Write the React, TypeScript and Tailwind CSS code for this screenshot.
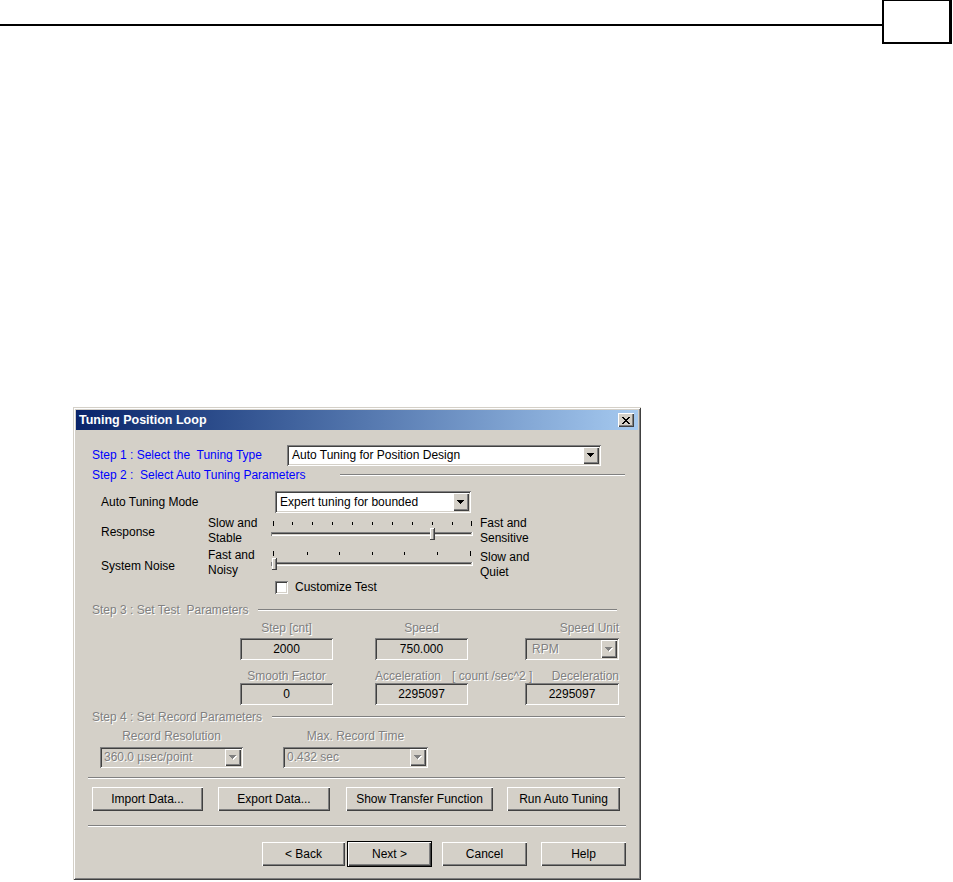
import type { ReactNode } from 'react'

const font = "font-['Liberation_Sans',Arial,sans-serif]"

// classic win2000 bevels
const raised =
  'bg-[#d4d0c8] shadow-[inset_1px_1px_#ffffff,inset_-1px_-1px_#404040,inset_-2px_-2px_#808080]'
const sunken =
  'shadow-[inset_1px_1px_#808080,inset_-1px_-1px_#ffffff,inset_2px_2px_#404040,inset_-2px_-2px_#d4d0c8]'
const dim = 'text-[#808080] [text-shadow:1px_1px_0_#ffffff]'
const etched = 'h-[2px] border-t border-t-[#808080] border-b border-b-white'

const Arrow = ({ disabled }: { disabled?: boolean }) => (
  <svg width="8" height="5" viewBox="0 0 8 5" shapeRendering="crispEdges">
    {disabled && <path d="M1 1H8V2H7V3H6V4H5V5H4V4H3V3H2V2H1Z" fill="#ffffff" />}
    <path d="M0 0H7V1H6V2H5V3H4V4H3V3H2V2H1V1H0Z" fill={disabled ? '#808080' : '#000000'} />
  </svg>
)

function Combo({
  text,
  className,
  disabled,
  textClass = 'pl-[2px]',
}: {
  text: string
  className: string
  disabled?: boolean
  textClass?: string
}) {
  return (
    <div
      className={`flex items-center p-[2px] ${disabled ? 'bg-[#d4d0c8]' : 'bg-white'} ${sunken} ${className}`}
    >
      <span className={`flex-1 whitespace-nowrap overflow-hidden ${textClass} ${disabled ? dim : ''}`}>
        {text}
      </span>
      <div className={`w-[16px] h-full flex items-center justify-center ${raised}`}>
        <Arrow disabled={disabled} />
      </div>
    </div>
  )
}

const Field = ({ value, className }: { value: string; className: string }) => (
  <div className={`h-[22px] flex items-center justify-center bg-[#d4d0c8] ${sunken} ${className}`}>
    {value}
  </div>
)

const Btn = ({ children, className }: { children: ReactNode; className: string }) => (
  <button
    type="button"
    className={`h-[24px] flex items-center justify-center whitespace-nowrap ${raised} ${className}`}
  >
    {children}
  </button>
)

function Slider({ ticks, pos, className }: { ticks: number[]; pos: number; className: string }) {
  return (
    <svg width="202" height="26" className={`block ${className}`} shapeRendering="crispEdges">
      {ticks.map((x, i) => {
        const long = i === 0 || i === ticks.length - 1
        return <rect key={i} x={x} y={long ? 2 : 3} width="1" height={long ? 5 : 3} fill="#000000" />
      })}
      {/* channel */}
      <rect x="0" y="13" width="202" height="4" fill="#d4d0c8" />
      <rect x="0" y="13" width="201" height="1" fill="#808080" />
      <rect x="1" y="14" width="199" height="1" fill="#404040" />
      <rect x="0" y="16" width="202" height="1" fill="#ffffff" />
      <rect x="0" y="13" width="1" height="4" fill="#808080" />
      <rect x="201" y="13" width="1" height="4" fill="#ffffff" />
      {/* thumb */}
      <rect x={pos - 2} y="9" width="5" height="12" fill="#d4d0c8" />
      <rect x={pos - 2} y="9" width="1" height="12" fill="#ffffff" />
      <rect x={pos - 2} y="9" width="5" height="1" fill="#ffffff" />
      <rect x={pos + 2} y="9" width="1" height="12" fill="#404040" />
      <rect x={pos - 2} y="20" width="5" height="1" fill="#404040" />
      <rect x={pos + 1} y="10" width="1" height="10" fill="#808080" />
    </svg>
  )
}

const CloseGlyph = () => (
  <svg width="8" height="7" viewBox="0 0 8 7" shapeRendering="crispEdges">
    <path
      d="M0 0H2V1H3V2H5V1H6V0H8V1H7V2H6V3H5V4H6V5H7V6H8V7H6V6H5V5H3V6H2V7H0V6H1V5H2V4H3V3H2V2H1V1H0Z"
      fill="#000000"
    />
  </svg>
)

export default function App() {
  return (
    <div className={`w-[953px] h-[882px] bg-white overflow-hidden text-[12px] leading-[15px] text-black ${font}`}>
      {/* page header rule + page number box */}
      <div className="flex items-start h-[44px]">
        <div className="flex-1 mt-[24px] h-[2px] bg-black" />
        <div className="w-[70px] h-[44px] mr-[1px] border-t border-l-2 border-r-[3px] border-b-2 border-black" />
      </div>

      {/* dialog */}
      <div className="ml-[73px] mt-[363px] w-[568px] h-[473px] p-[3px] bg-[#d4d0c8] shadow-[inset_1px_1px_#d4d0c8,inset_-1px_-1px_#404040,inset_2px_2px_#ffffff,inset_-2px_-2px_#808080]">
        <div className="h-[20px] flex items-center justify-between pl-[3px] pr-[4px] bg-linear-to-r from-[#0a246a] to-[#a6caf0]">
          <span className="text-white font-bold text-[12.5px]">Tuning Position Loop</span>
          <div className={`w-[16px] h-[14px] flex items-center justify-center ${raised}`}>
            <CloseGlyph />
          </div>
        </div>

        {/* Step 1 */}
        <div className="mt-[15px] h-[21px] flex items-center">
          <span className="ml-[16px] w-[195px] text-[#0000ff] whitespace-nowrap">
            {'Step 1 : Select the\u00a0 Tuning Type'}
          </span>
          <Combo className="w-[314px] h-[21px]" textClass="pl-[3px]" text="Auto Tuning for Position Design" />
        </div>

        {/* Step 2 */}
        <div className="mt-[2px] h-[14px] flex items-center">
          <span className="ml-[16px] w-[248px] text-[#0000ff] whitespace-nowrap">
            {'Step 2 :\u00a0 Select Auto Tuning Parameters'}
          </span>
          <div className={`w-[285px] ${etched}`} />
        </div>

        <div className="mt-[9px] h-[22px] flex items-center">
          <span className="ml-[25px] w-[174px]">Auto Tuning Mode</span>
          <Combo className="w-[196px] h-[22px]" textClass="pl-[3px]" text="Expert tuning for bounded" />
        </div>

        <div className="mt-[3px] h-[30px] flex items-start">
          <span className="ml-[25px] w-[107px] mt-[9px]">Response</span>
          <div className="w-[63px]">
            Slow and
            <br />
            Stable
          </div>
          <Slider className="mt-[3px]" ticks={[2, 21, 41, 61, 81, 101, 121, 141, 161, 181, 200]} pos={161} />
          <div className="ml-[7px]">
            Fast and
            <br />
            Sensitive
          </div>
        </div>

        <div className="mt-[2px] h-[30px] flex items-start">
          <span className="ml-[25px] w-[107px] mt-[11px]">System Noise</span>
          <div className="w-[63px]">
            Fast and
            <br />
            Noisy
          </div>
          <Slider className="mt-[1px]" ticks={[2, 36, 68, 101, 133, 166, 199]} pos={3} />
          <div className="ml-[7px] mt-[2px]">
            Slow and
            <br />
            Quiet
          </div>
        </div>

        <div className="mt-[3px] h-[13px] flex items-center">
          <div className={`ml-[199px] w-[13px] h-[13px] bg-white ${sunken}`} />
          <span className="ml-[7px]">Customize Test</span>
        </div>

        {/* Step 3 */}
        <div className={`mt-[9px] h-[14px] flex items-center ${dim}`}>
          <span className="ml-[16px] w-[166px] whitespace-nowrap">{'Step 3 : Set Test\u00a0 Parameters'}</span>
          <div className={`w-[359px] ${etched}`} />
        </div>

        <div className={`mt-[4px] h-[14px] flex items-center ${dim}`}>
          <span className="ml-[164px] w-[93px] text-center">Step [cnt]</span>
          <span className="ml-[42px] w-[93px] text-center">Speed</span>
          <span className="ml-[57px] w-[94px] text-right">Speed Unit</span>
        </div>
        <div className="mt-[3px] h-[22px] flex">
          <Field className="ml-[164px] w-[93px]" value="2000" />
          <Field className="ml-[42px] w-[93px]" value="750.000" />
          <Combo className="ml-[57px] w-[94px] h-[22px]" textClass="pl-[5px]" text="RPM" disabled />
        </div>

        <div className={`mt-[10px] h-[13px] flex items-center ${dim}`}>
          <span className="ml-[164px] w-[93px] text-center">Smooth Factor</span>
          <div className="ml-[42px] w-[244px] flex whitespace-nowrap">
            <span>Acceleration</span>
            <span className="ml-[11px]">[ count /sec^2 ]</span>
            <span className="ml-auto">Deceleration</span>
          </div>
        </div>
        <div className="h-[22px] flex">
          <Field className="ml-[164px] w-[93px]" value="0" />
          <Field className="ml-[42px] w-[93px]" value="2295097" />
          <Field className="ml-[57px] w-[94px]" value="2295097" />
        </div>

        {/* Step 4 */}
        <div className={`mt-[5px] h-[14px] flex items-center ${dim}`}>
          <span className="ml-[16px] w-[180px] whitespace-nowrap">Step 4 : Set Record Parameters</span>
          <div className={`w-[353px] ${etched}`} />
        </div>
        <div className={`mt-[5px] h-[14px] flex items-center ${dim}`}>
          <span className="ml-[24px] w-[143px] text-center">Record Resolution</span>
          <span className="ml-[40px] w-[145px] text-center">Max. Record Time</span>
        </div>
        <div className="mt-[4px] h-[21px] flex">
          <Combo className="ml-[24px] w-[143px] h-[21px]" text={'360.0 \u00b5sec/point'} disabled />
          <Combo className="ml-[40px] w-[145px] h-[21px]" text="0.432 sec" disabled />
        </div>

        <div className={`mt-[9px] ml-[12px] w-[537px] ${etched}`} />

        <div className="mt-[8px] h-[24px] flex">
          <Btn className="ml-[16px] w-[111px]">Import Data...</Btn>
          <Btn className="ml-[15px] w-[112px]">Export Data...</Btn>
          <Btn className="ml-[16px] w-[147px]">Show Transfer Function</Btn>
          <Btn className="ml-[14px] w-[113px]">Run Auto Tuning</Btn>
        </div>

        <div className={`mt-[14px] ml-[12px] w-[538px] ${etched}`} />

        <div className="mt-[15px] h-[24px] flex">
          <Btn className="ml-[186px] w-[83px]">&lt; Back</Btn>
          <Btn className="ml-[3px] w-[83px] outline outline-black">Next &gt;</Btn>
          <Btn className="ml-[11px] w-[85px]">Cancel</Btn>
          <Btn className="ml-[14px] w-[85px]">Help</Btn>
        </div>
      </div>
    </div>
  )
}
